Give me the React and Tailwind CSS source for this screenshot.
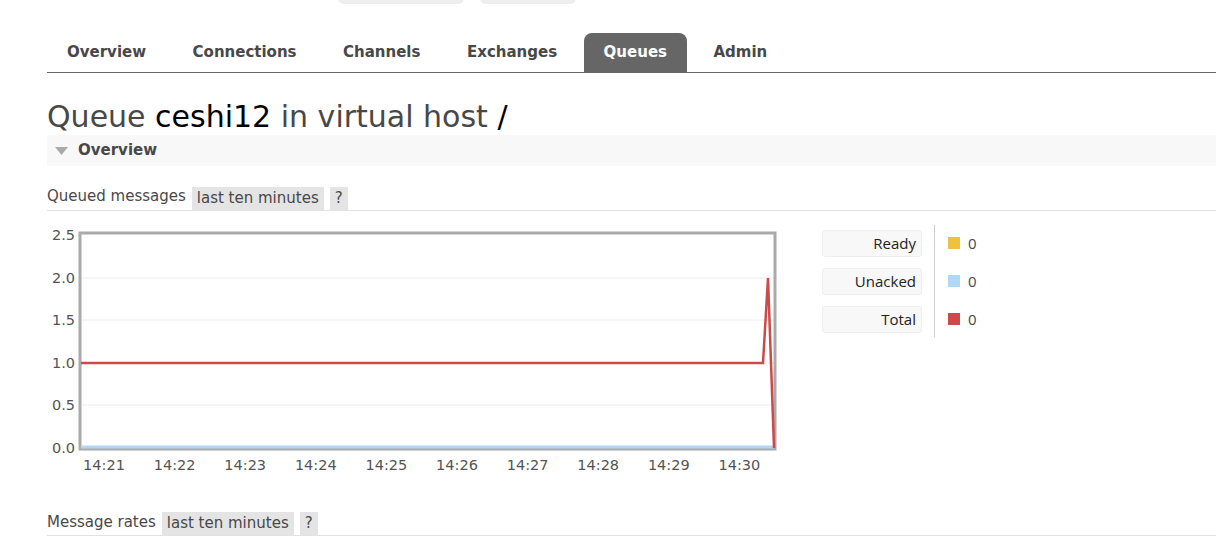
const tabs = ["Overview", "Connections", "Channels", "Exchanges", "Queues", "Admin"];

const yTicks = [
  { label: "2.5", y: 10 },
  { label: "2.0", y: 53 },
  { label: "1.5", y: 95 },
  { label: "1.0", y: 138 },
  { label: "0.5", y: 180 },
  { label: "0.0", y: 223 },
];

const xTicks = ["14:21", "14:22", "14:23", "14:24", "14:25", "14:26", "14:27", "14:28", "14:29", "14:30"];

const legend = [
  { label: "Ready", color: "bg-[#edc240]", value: 0 },
  { label: "Unacked", color: "bg-[#afd8f8]", value: 0 },
  { label: "Total", color: "bg-[#cb4b4b]", value: 0 },
];

function RateHeader({ title }) {
  return (
    <div className="flex items-end gap-[6px] border-b border-[#e2e2e2]">
      <span className="pb-[2px]">{title}</span>
      <span className="bg-[#e4e4e4] px-[5px] py-[2px] leading-[19px]">last ten minutes</span>
      <span className="bg-[#e4e4e4] px-[5px] py-[2px] leading-[19px]">?</span>
    </div>
  );
}

function Chart() {
  // plot box: x 32..729, y 7..225 (svg coords)
  return (
    <svg width="740" height="250" className="block shrink-0">
      {yTicks.slice(1, 5).map((t) => (
        <line key={t.label} x1="34" x2="727" y1={t.y} y2={t.y} stroke="#ececec" strokeWidth="1" />
      ))}
      {yTicks.map((t) => (
        <text key={t.label} x="28" y={t.y + 5} textAnchor="end" fontSize="14.5" fill="#545454" fontFamily="'DejaVu Sans', Verdana, sans-serif">
          {t.label}
        </text>
      ))}
      {xTicks.map((t, i) => (
        <text key={t} x={57 + i * 70.6} y="245" textAnchor="middle" fontSize="14.5" fill="#545454" fontFamily="'DejaVu Sans', Verdana, sans-serif">
          {t}
        </text>
      ))}
      <rect x="33" y="8" width="695" height="216" fill="none" stroke="#aaaaaa" strokeWidth="3" />
      <polyline points="34,222 727,222" fill="none" stroke="#afd8f8" strokeWidth="3" />
      <polyline points="34,138 716,138 721,53 727,223" fill="none" stroke="#cb4b4b" strokeWidth="2.5" strokeLinejoin="miter" />
    </svg>
  );
}

export default function App() {
  return (
    <div className="min-h-[545px] overflow-hidden bg-white pl-[47px] text-[15px] text-[#484848] font-['DejaVu_Sans','Verdana',sans-serif]">
      {/* clipped controls at the top */}
      <div className="flex gap-4 pl-[291px] -mt-[20px] h-[24px]">
        <div className="w-[126px] h-[24px] rounded-[6px] bg-[#eeeeee]" />
        <div className="w-[96px] h-[24px] rounded-[6px] bg-[#eeeeee]" />
      </div>

      {/* tabs */}
      <div className="mt-[29px] flex gap-[6.5px] border-b border-[#666]">
        {tabs.map((t) => (
          <div
            key={t}
            className={`px-[20px] h-[39px] flex items-center font-bold rounded-t-[8px] ${t === "Queues" ? "bg-[#666] text-white" : "text-[#484848]"}`}
          >
            {t}
          </div>
        ))}
      </div>

      <h1 className="mt-[26px] text-[30px] leading-[36px] text-[#484848] whitespace-nowrap">
        Queue <span className="text-black">ceshi12</span> in virtual host <span className="text-black">/</span>
      </h1>

      <div className="h-[31px] bg-[#f8f8f8] flex items-center gap-[10px] pl-[8px]">
        <svg width="13" height="8" viewBox="0 0 13 8">
          <polygon points="0,0 13,0 6.5,8" fill="#aaaaaa" />
        </svg>
        <span className="font-bold">Overview</span>
      </div>

      <div className="mt-[19px]">
        <RateHeader title="Queued messages" />
      </div>

      <div className="mt-[14px] flex items-start">
        <Chart />
        <div className="ml-[35px] flex">
          <div className="flex flex-col gap-[11px] pt-[5px] pr-[12px] border-r border-[#cccccc] pb-[4px] font-['Open_Sans',sans-serif] text-[#222]">
            {legend.map((l) => (
              <div key={l.label} className="w-[100px] h-[27px] rounded-[3px] bg-[#f8f8f8] border border-[#eeeeee] flex items-center justify-end pr-[5px]">
                {l.label}
              </div>
            ))}
          </div>
          <div className="flex flex-col gap-[11px] pt-[5px] pl-[13px] font-['Open_Sans',sans-serif] text-[#484848]">
            {legend.map((l) => (
              <div key={l.label} className="h-[27px] flex items-center gap-[8px]">
                <span className={`w-[12px] h-[12px] ${l.color}`} />
                <span>{l.value}</span>
              </div>
            ))}
          </div>
        </div>
      </div>

      <div className="mt-[36px]">
        <RateHeader title="Message rates" />
      </div>
    </div>
  );
}
